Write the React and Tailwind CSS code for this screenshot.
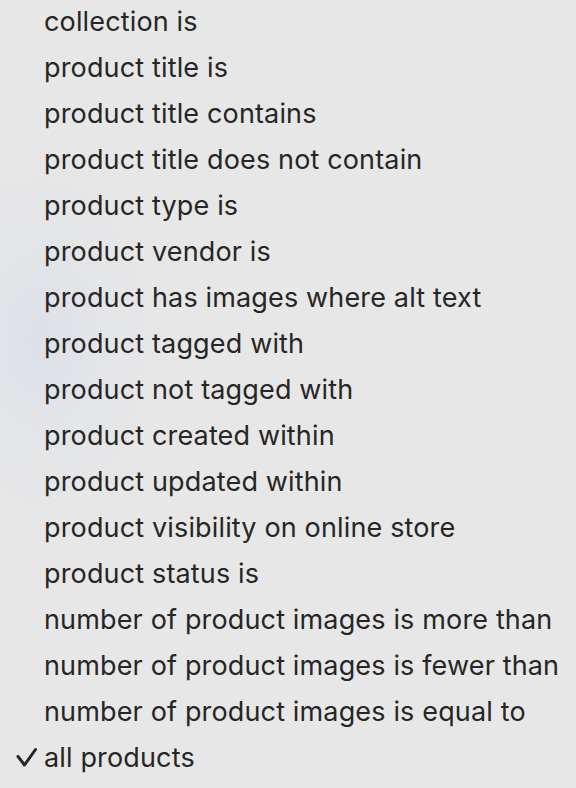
import React from "react";

const options = [
  "collection is",
  "product title is",
  "product title contains",
  "product title does not contain",
  "product type is",
  "product vendor is",
  "product has images where alt text",
  "product tagged with",
  "product not tagged with",
  "product created within",
  "product updated within",
  "product visibility on online store",
  "product status is",
  "number of product images is more than",
  "number of product images is fewer than",
  "number of product images is equal to",
  "all products",
];

function Check() {
  return (
    <svg width="22" height="22" viewBox="0 0 22 22" className="mr-[6px] mt-[1px]">
      <path d="M2 9.5 L8.5 18 L19.5 2.5" fill="none" stroke="#262626" strokeWidth="3" strokeLinecap="round" strokeLinejoin="round" />
    </svg>
  );
}

export default function App() {
  const selected = "all products";
  return (
    <div
      className="w-[576px] h-[788px] overflow-hidden bg-[#e7e7e7] bg-[radial-gradient(ellipse_130px_200px_at_40px_340px,#dde0e8_0%,#e4e5e8_50%,#e7e7e7_100%)] text-[#262626]"
      style={{ fontFamily: "Inter, 'Noto Sans', sans-serif" }}
    >
      <ul className="-mt-[2px]">
        {options.map((o) => (
          <li key={o} className="flex items-center h-[46px] text-[27px] tracking-[0.15px] leading-none whitespace-nowrap">
            <span className="w-[44px] flex justify-end">
              {o === selected ? <Check /> : null}
            </span>
            <span>{o}</span>
          </li>
        ))}
      </ul>
    </div>
  );
}
